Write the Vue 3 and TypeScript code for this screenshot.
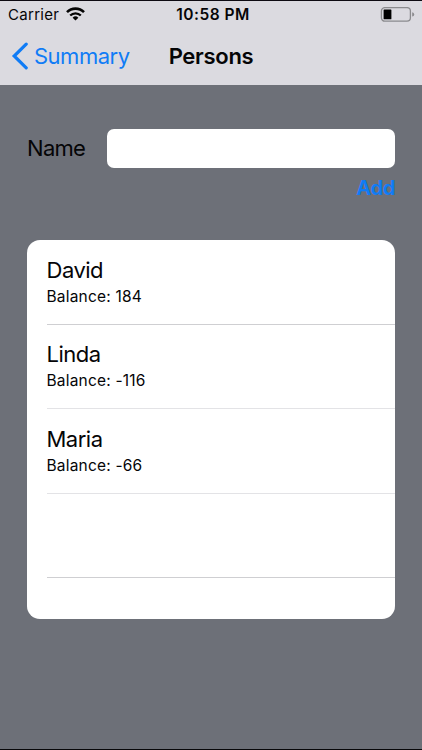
<script setup lang="ts">
import { ref } from 'vue'

interface Person {
  name: string
  balance: number
}

const newName = ref('')
const persons = ref<Person[]>([
  { name: 'David', balance: 184 },
  { name: 'Linda', balance: -116 },
  { name: 'Maria', balance: -66 },
])

function addPerson(): void {
  const name = newName.value.trim()
  if (!name) return
  persons.value.push({ name, balance: 0 })
  newName.value = ''
}
</script>

<template>
  <div class="screen">
    <header class="top">
      <div class="status">
        <div class="carrier">
          <span>Carrier</span>
          <svg class="wifi" width="19" height="14" viewBox="0 0 19 14">
            <path d="M1 5.2 A12 12 0 0 1 18 5.2" fill="none" stroke="#050505" stroke-width="2.6" />
            <path d="M4.2 8.5 A7.5 7.5 0 0 1 14.8 8.5" fill="none" stroke="#050505" stroke-width="2.3" />
            <path d="M9.5 13.6 L6.6 10.8 A4.1 4.1 0 0 1 12.4 10.8 Z" fill="#050505" />
          </svg>
        </div>
        <div class="time">10:58 PM</div>
        <svg class="battery" width="36" height="16" viewBox="0 0 36 16">
          <rect x="2.4" y="0.6" width="29" height="13.6" rx="3.4" fill="none" stroke="#8b8b8e" stroke-width="1.3" />
          <rect x="4.6" y="2.5" width="7.8" height="9.8" rx="0.6" fill="#000" />
          <path d="M33.2 5.2 Q35.2 5.7 35.2 7.4 Q35.2 9.1 33.2 9.6 Z" fill="#8b8b8e" />
        </svg>
      </div>
      <nav class="nav">
        <a class="back">
          <svg width="18" height="30" viewBox="0 0 18 30">
            <path d="M16.2 3.2 L4.2 15 L16.2 26.8" fill="none" stroke="#107cf6" stroke-width="3.2" stroke-linecap="round" />
          </svg>
          <span>Summary</span>
        </a>
        <h1 class="title">Persons</h1>
      </nav>
    </header>

    <form class="form" @submit.prevent="addPerson">
      <div class="field">
        <label class="label" for="person-name">Name</label>
        <input id="person-name" v-model="newName" class="input" type="text" autocomplete="off" />
      </div>
      <button class="add" type="submit">Add</button>
    </form>

    <ul class="list">
      <li v-for="person in persons" :key="person.name" class="row">
        <span class="name">{{ person.name }}</span>
        <span class="balance">Balance: {{ person.balance }}</span>
      </li>
      <li class="row"></li>
    </ul>
  </div>
</template>

<style>
body {
  margin: 0;
  background: #6d7078;
}
</style>

<style scoped>
.screen {
  box-sizing: border-box;
  height: 750px;
  overflow: hidden;
  background: #6d7078;
  border-top: 1px solid #0d0a12;
  border-bottom: 1px solid #08080a;
  font-family: Inter, "Liberation Sans", sans-serif;
  color: #050507;
}
.top {
  box-sizing: border-box;
  height: 84px;
  background: #dbdae0;
}
.status {
  display: grid;
  grid-template-columns: 1fr auto 1fr;
  align-items: center;
  height: 27px;
  padding: 0 7px 0 8px;
  font-size: 15px;
}
.carrier {
  display: flex;
  align-items: center;
  gap: 7px;
  letter-spacing: 0.3px;
}
.wifi {
  margin-top: -2px;
}
.time {
  padding-left: 3px;
  font-size: 15.5px;
  font-weight: 600;
  letter-spacing: 0.5px;
}
.battery {
  justify-self: end;
}
.nav {
  display: grid;
  grid-template-columns: 1fr auto 1fr;
  align-items: center;
  height: 56px;
  padding: 0 10px;
}
.back {
  display: flex;
  align-items: center;
  gap: 6px;
  color: #107cf6;
  font-size: 22px;
  letter-spacing: -0.5px;
}
.title {
  margin: 0;
  font-size: 22px;
  font-weight: 600;
  letter-spacing: -0.3px;
}
.back span,
.title {
  padding-bottom: 1px;
}
.form {
  display: flex;
  flex-direction: column;
  align-items: flex-end;
  margin: 44px 27px 0;
}
.field {
  display: flex;
  align-items: center;
  width: 100%;
}
.label {
  width: 80px;
  padding-bottom: 2px;
  font-size: 22px;
  letter-spacing: -0.7px;
}
.input {
  box-sizing: border-box;
  flex: 1;
  min-width: 0;
  height: 39px;
  padding: 0 9px;
  border: 0;
  border-radius: 7px;
  background: #fff;
  font: inherit;
  font-size: 20px;
  outline: none;
}
.add {
  height: 24px;
  margin-top: 8px;
  padding: 0;
  border: 0;
  background: none;
  color: #107cf6;
  font: inherit;
  font-size: 20px;
  font-weight: 700;
  letter-spacing: -0.3px;
  line-height: 24px;
}
.list {
  box-sizing: border-box;
  height: 378.2px;
  margin: 40.4px 27px 0;
  padding: 0.2px 0 0 19.5px;
  overflow: hidden;
  border-radius: 13px;
  background: #fff;
  list-style: none;
}
.row {
  box-sizing: border-box;
  display: flex;
  flex-direction: column;
  height: 84.33px;
  padding-top: 15.5px;
  border-bottom: 1px solid #cfcfd2;
}
.row:nth-child(2),
.row:nth-child(3) {
  border-bottom-color: #e3e3e6;
}
.name {
  font-size: 22px;
  line-height: 28px;
  letter-spacing: -0.5px;
}
.balance {
  font-size: 15.5px;
  line-height: 25px;
  letter-spacing: 0.2px;
}
</style>
